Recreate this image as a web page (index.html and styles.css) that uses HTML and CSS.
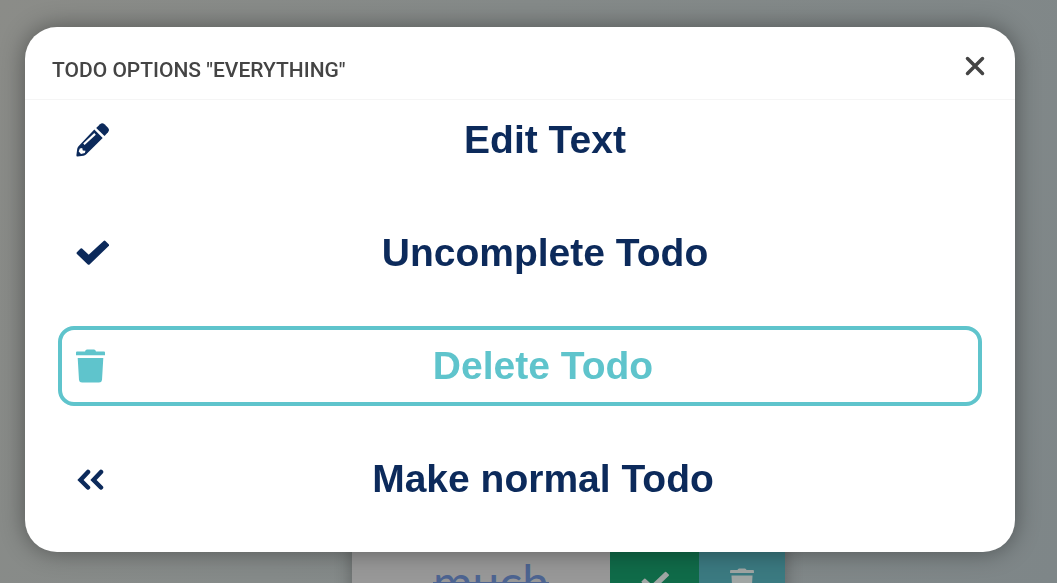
FILE: index.html
```html
<!DOCTYPE html>
<html lang="en">
<head>
<meta charset="utf-8">
<meta name="viewport" content="width=device-width, initial-scale=1">
<title>Todo options</title>
<link rel="stylesheet" href="styles.css">
</head>
<body>
<main class="page">
  <div class="todo">
    <div class="todo-text">much</div>
    <button class="todo-action todo-check" type="button" aria-label="Complete">
      <svg width="28" height="24" viewBox="0 0 33 26" aria-hidden="true"><path d="M1.500 12.700L4.500 9.800 12.700 17.300 29 2 32 5 12.700 23.500z" fill="currentColor" stroke="currentColor" stroke-width="2" stroke-linejoin="round"/></svg>
    </button>
    <button class="todo-action todo-delete" type="button" aria-label="Delete">
      <svg width="24" height="28" viewBox="0 0 29 34" aria-hidden="true"><path d="M1 2.500H9Q9.500.5 11 .5H18Q19.500.5 20 2.500H28Q29 2.500 29 3.500V6.200H0V3.500Q0 2.500 1 2.500zM1.700 9H27.300L26 31Q25.700 33.500 23 33.500H6Q3.300 33.500 3 31z" fill="currentColor"/></svg>
    </button>
  </div>
</main>
<div class="overlay">
  <section class="modal" role="dialog" aria-modal="true" aria-labelledby="modal-title">
    <header class="modal-header">
      <h1 class="modal-title" id="modal-title">TODO OPTIONS "EVERYTHING"</h1>
      <button class="close" type="button" aria-label="Close">
        <svg width="20" height="20" viewBox="0 0 20 20" aria-hidden="true"><path d="M2.500 2.500l15 15M17.500 2.500l-15 15" fill="none" stroke="currentColor" stroke-width="3.500" stroke-linecap="round"/></svg>
      </button>
    </header>
    <div class="options">
      <button class="option" type="button">
        <svg width="33" height="34" viewBox="0 0 33 34" aria-hidden="true"><path fill="currentColor" fill-rule="evenodd" d="M18.300 6.500L26.700 15 10 31.500Q9 32.400 7.500 32.700L1.500 33.500Q.3 33.600.4 32.300L1.200 26Q1.400 24.500 2.300 23.500zM18.300 10L7.200 20.500 8.600 22 19.800 11.700zM3.800 25.500L2.700 28.500 5 31 8.800 30 9.500 27.700 6.800 27.600 6.200 25z"/><path fill="currentColor" d="M20.200 5L24 1.200Q26.300-.8 28.500 1.200L32 4.700Q34 7 32 9.200L28.500 13z"/></svg>
        <span class="option-label">Edit Text</span>
      </button>
      <button class="option" type="button">
        <svg width="33" height="26" viewBox="0 0 33 26" aria-hidden="true"><path d="M1.800 13L5.200 9.500 12.700 16.500 28.500 1.800 31.800 5.200 12.700 23.500z" fill="currentColor" stroke="currentColor" stroke-width="2.500" stroke-linejoin="round"/></svg>
        <span class="option-label">Uncomplete Todo</span>
      </button>
      <button class="option option-active" type="button">
        <svg width="29" height="34" viewBox="0 0 29 34" aria-hidden="true"><path d="M1 2.500H9Q9.500.5 11 .5H18Q19.500.5 20 2.500H28Q29 2.500 29 3.500V6.200H0V3.500Q0 2.500 1 2.500zM1.700 9H27.300L26 31Q25.700 33.500 23 33.500H6Q3.300 33.500 3 31z" fill="currentColor"/></svg>
        <span class="option-label">Delete Todo</span>
      </button>
      <button class="option" type="button">
        <svg width="29" height="22" viewBox="0 0 29 22" aria-hidden="true"><path d="M12 4L4.500 12l7.500 7.500M25 4L17.500 12l7.500 7.500" fill="none" stroke="currentColor" stroke-width="4.500" stroke-linecap="round"/></svg>
        <span class="option-label">Make normal Todo</span>
      </button>
    </div>
  </section>
</div>
</body>
</html>
```
FILE: styles.css
```css
* { box-sizing: border-box; }

body {
  margin: 0;
  font-family: "Liberation Sans", Arial, sans-serif;
}

button {
  margin: 0;
  border: 0;
  font: inherit;
  color: inherit;
  cursor: pointer;
}

svg { display: block; flex: none; }

.page {
  display: flex;
  flex-direction: column;
  align-items: center;
  height: 100vh;
  padding: 540px 0 0 80px;
  overflow: hidden;
  background: linear-gradient(115deg, #8b8c88, #858a89 40%, #7e8688);
}

.todo {
  display: flex;
  flex: none;
  width: 433px;
  height: 80px;
  background: #989898;
  box-shadow: 0 0 16px rgba(0, 0, 0, 0.3);
}

.todo-text {
  flex: 1;
  padding-left: 20px;
  text-align: center;
  font-family: Lato, sans-serif;
  font-size: 48px;
  line-height: 84px;
  color: #4d6491;
  text-decoration: line-through;
}

.todo-action {
  display: flex;
  justify-content: center;
  align-items: center;
  padding: 4px 0 0;
  color: #a0a6a4;
}

.todo-check { width: 89px; background: #106b49; }
.todo-delete { width: 86px; background: #3b7a81; }

.overlay {
  position: fixed;
  inset: 0;
  padding: 27px 42px 27px 25px;
}

.modal {
  background: #fff;
  border-radius: 32px;
  box-shadow: 0 0 24px rgba(0, 0, 0, 0.4);
}

.modal-header {
  display: flex;
  justify-content: space-between;
  align-items: center;
  height: 73px;
  padding: 6px 30px 0 27px;
  border-bottom: 1px solid #f5f5f5;
  color: #444;
}

.modal-title {
  margin: 0;
  padding-top: 8px;
  font-family: Roboto, sans-serif;
  font-size: 21px;
  font-weight: 500;
  line-height: 32px;
}

.close {
  padding: 0;
  background: none;
}

.options {
  display: flex;
  flex-direction: column;
  gap: 33px;
  padding: 0 33px 33px;
}

.option {
  display: flex;
  align-items: center;
  gap: 3px;
  height: 80px;
  padding: 0 0 0 14px;
  border: 4px solid transparent;
  border-radius: 16px;
  background: none;
  color: #0c2a5b;
  font-size: 39px;
  font-weight: 700;
}

.option-active {
  border-color: #5fc4cc;
  color: #5fc4cc;
}

.option-label { flex: 1; }
```
